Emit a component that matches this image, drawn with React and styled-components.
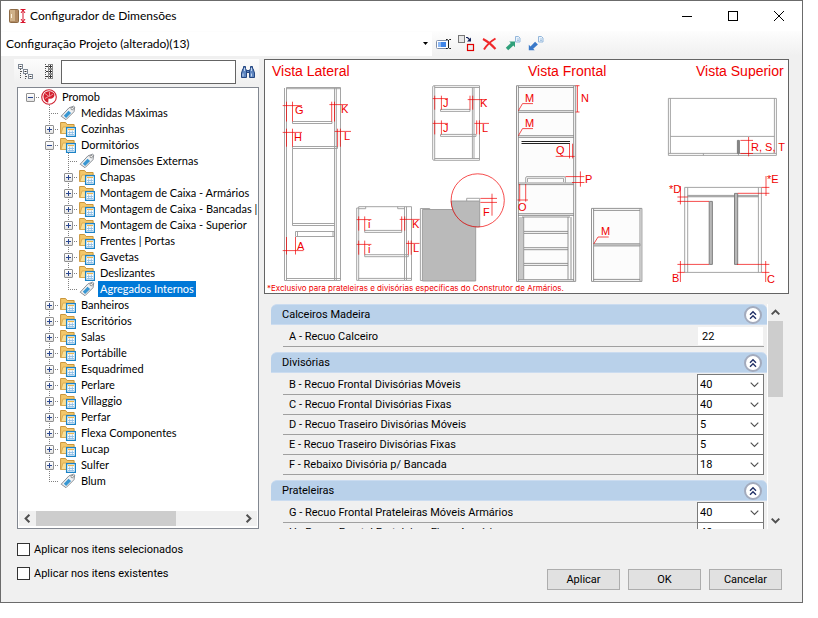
import React, { useState } from "react";
import styled, { createGlobalStyle } from "styled-components";

const GlobalStyle = createGlobalStyle`
  *, *::before, *::after { box-sizing: border-box; }
  html, body { margin: 0; background: #ffffff; }
  body, button, input, select {
    font-family: Roboto, "Liberation Sans", sans-serif;
    font-size: 11px;
    color: #000000;
  }
`;

const Screen = styled.div`
  height: 100vh;
  min-height: 480px;
  padding: 0 15px 15px 0;
`;

const Dialog = styled.main`
  display: flex;
  flex-direction: column;
  height: 100%;
  background: #f0f0f0;
  border: 1px solid #6b6b6b;
`;

const TitleBar = styled.header`
  display: flex;
  align-items: center;
  flex: 0 0 30px;
  padding: 0 0 0 7px;
  background: #ffffff;
`;

const Title = styled.h1`
  flex: 1;
  margin: 0 0 0 4px;
  font: 400 12px/16px Lato, "Open Sans", sans-serif;
`;

const WindowButton = styled.button`
  display: grid;
  place-items: center;
  width: 46px;
  height: 30px;
  padding: 0;
  border: 0;
  background: transparent;
`;

const ConfigBar = styled.div`
  display: flex;
  align-items: center;
  flex: 0 0 25px;
  background: linear-gradient(#fdfdfd, #f0f0f0);
`;

const ConfigPicker = styled.label`
  display: grid;
  grid-template-columns: 1fr 13px;
  align-items: center;
  flex: 0 1 431px;
  height: 24px;
  background: #ffffff;

  > * { grid-row: 1; }
  > select { grid-column: 1 / 3; }
  > svg { grid-column: 2; justify-self: center; pointer-events: none; }
`;

const ConfigSelect = styled.select`
  appearance: none;
  width: 100%;
  height: 24px;
  padding: 0 12px 0 5px;
  border: 0;
  background: transparent;
  font: 400 12px/16px Lato, "Open Sans", sans-serif;
`;

const IconButton = styled.button`
  display: grid;
  place-items: center;
  flex: 0 0 ${(p) => p.$width || 23}px;
  height: 24px;
  padding: 0;
  border: 0;
  background: transparent;
`;

const Body = styled.div`
  display: flex;
  flex: 1;
  gap: 5px;
  min-height: 0;
  padding: 3px 13px 0 13px;
`;

const Sidebar = styled.aside`
  display: flex;
  flex-direction: column;
  flex: 0 0 245px;
  min-width: 0;
  min-height: 0;
`;

const SearchBar = styled.div`
  display: flex;
  align-items: center;
  flex: 0 0 25px;
  background: linear-gradient(#fcfcfc, #f0f0f0);
`;

const SearchInput = styled.input`
  flex: 1;
  min-width: 0;
  height: 24px;
  padding: 0 4px;
  border: 1px solid #646464;
  border-radius: 0;
  background: #ffffff;
`;

const TreeBox = styled.div`
  display: flex;
  flex-direction: column;
  flex: 1;
  min-height: 0;
  margin: 3px 0 0 3px;
  padding: 1px;
  border: 1px solid #828790;
  background: #ffffff;
`;

const TreeList = styled.ul`
  flex: 1;
  min-height: 0;
  margin: 0;
  padding: 0 0 0 2px;
  overflow: auto;
  scrollbar-width: none;
  list-style: none;
`;

const TreeRow = styled.li`
  display: flex;
  align-items: center;
  height: 16px;
  white-space: nowrap;

  > svg { flex: 0 0 16px; margin: 0 3px 0 1px; }
`;

const dots = "repeating-linear-gradient(";
const Guide = styled.span`
  display: flex;
  align-items: center;
  justify-content: center;
  flex: 0 0 19px;
  height: 16px;
  background-repeat: no-repeat;
  background-image:
    ${dots}#808080 0 1px, transparent 1px 2px),
    ${dots}90deg, #808080 0 1px, transparent 1px 2px);
  background-position: 9px 0, 9px 8px;
  background-size:
    1px ${(p) => ({ full: 16, half: 8 }[p.$line] || 0)}px,
    ${(p) => (p.$branch ? 10 : 0)}px 1px;
`;

const Expander = styled.button`
  display: grid;
  place-items: center;
  width: 9px;
  height: 9px;
  padding: 0;
  border: 1px solid #919191;
  border-radius: 1px;
  background: linear-gradient(#ffffff, #e4e4e4);
`;

const TreeLabel = styled.span`
  padding: 0 2px;
  font-family: Lato, "Liberation Sans", sans-serif;
  line-height: 16px;
  color: ${(p) => (p.$selected ? "#ffffff" : "#000000")};
  background: ${(p) => (p.$selected ? "#0078d7" : "transparent")};
`;

const HScroll = styled.div`
  display: flex;
  align-items: center;
  flex: 0 0 15px;
  margin-bottom: 1px;
  background: #f0f0f0;
`;

const HThumb = styled.div`
  flex: 0 0 59%;
  height: 15px;
  background: #cdcdcd;
`;

const ScrollArrow = styled.button`
  display: grid;
  place-items: center;
  flex: 0 0 17px;
  padding: 0;
  border: 0;
  background: transparent;
`;

const Spacer = styled.div`
  flex: 1;
`;

const Content = styled.section`
  display: flex;
  flex-direction: column;
  flex: 1;
  min-width: 0;
  min-height: 0;
`;

const Preview = styled.figure`
  flex: 0 0 235px;
  margin: 0;
  border: 1px solid #646464;
  background: #ffffff;

  > svg { display: block; width: 100%; height: 233px; }
`;

const ListArea = styled.div`
  display: flex;
  flex: 1;
  min-height: 0;
  margin: 10px 6px 0 7px;
`;

const Groups = styled.div`
  flex: 1;
  min-width: 0;
  overflow: auto;
  scrollbar-width: none;
`;

const Group = styled.section`
  margin-bottom: 5px;
`;

const GroupHeader = styled.div`
  display: flex;
  align-items: center;
  justify-content: space-between;
  height: 21px;
  padding: 0 5px 0 11px;
  border: 1px solid #cbdcf0;
  border-width: 1px 0;
  border-radius: 6px 6px 0 0;
  background: #b9d1ea;
`;

const GroupTitle = styled.h2`
  margin: 0;
  font-size: 11px;
  font-weight: 400;
  line-height: 16px;
`;

const CollapseButton = styled.button`
  display: grid;
  place-items: center;
  width: 18px;
  height: 18px;
  padding: 0;
  border: 2px solid #a3abbd;
  border-radius: 50%;
  background: #ffffff;
`;

const GroupRows = styled.div`
  padding: 2px 3px 0 12px;
`;

const Field = styled.div`
  display: flex;
  height: 20px;
  border-bottom: 1px solid #a0a0a0;
`;

const FieldLabel = styled.label`
  flex: 1;
  min-width: 0;
  padding-left: 6px;
  line-height: 20px;
  white-space: nowrap;
`;

const TextField = styled.input`
  width: 65px;
  height: 18px;
  margin-right: 1px;
  padding: 0 4px;
  border: 0;
  border-radius: 0;
  background: #ffffff;
`;

const Combo = styled.div`
  display: grid;
  grid-template-columns: 1fr 18px;
  align-items: center;
  width: 67px;
  height: 21px;
  margin-top: -1px;
  border: 1px solid #7a7a7a;
  background: #ffffff;

  > * { grid-row: 1; }
  > select { grid-column: 1 / 3; }
  > svg { grid-column: 2; justify-self: center; pointer-events: none; }
`;

const ComboSelect = styled.select`
  appearance: none;
  width: 100%;
  height: 19px;
  padding: 0 0 1px 2px;
  border: 0;
  background: transparent;
`;

const VScroll = styled.div`
  display: flex;
  flex-direction: column;
  flex: 0 0 16px;
  border-left: 1px solid #ffffff;
`;

const VThumb = styled.div`
  flex: 0 0 76px;
  background: #cdcdcd;
`;

const Footer = styled.footer`
  display: flex;
  justify-content: space-between;
  flex: 0 0 73px;
  padding: 12px 20px 12px 16px;
`;

const Options = styled.div`
  display: flex;
  flex-direction: column;
  gap: 8px;
`;

const Option = styled.label`
  display: flex;
  align-items: center;
  gap: 4px;
  height: 16px;
`;

const CheckBox = styled.input`
  appearance: none;
  width: 13px;
  height: 13px;
  margin: 0;
  border: 1px solid #333333;
  background: #ffffff;

  &:checked { background: #0078d7; }
`;

const Actions = styled.div`
  display: flex;
  align-items: flex-end;
  gap: 8px;
`;

const ActionButton = styled.button`
  width: 73px;
  height: 21px;
  padding: 0;
  border: 1px solid #adadad;
  background: #e1e1e1;
`;

/* ---------- icons ---------- */

const AppIcon = () => (
  <svg width="18" height="16" viewBox="0 0 18 16" aria-hidden="true">
    <rect x="1.500" y="1.500" width="9" height="13" rx="1" fill="#b08a62" stroke="#8d6a45" />
    <rect x="2" y="2" width="5" height="11" fill="#d9bd97" opacity=".75" />
    <rect x="3" y="6" width="1" height="4" fill="#fff3df" />
    <path d="M12.500 1.500h5M12.500 14.500h5M15 2v12M13 5l2-3 2 3M13 11l2 3 2-3" fill="none" stroke="#d8132b" />
  </svg>
);

const RenameIcon = () => (
  <svg width="16" height="14" viewBox="0 0 16 14" aria-hidden="true">
    <rect x=".5" y="3.500" width="12" height="8" rx="1" fill="#fff" stroke="#7e8ea8" />
    <rect x="2" y="5" width="8" height="5" fill="#3f85e8" />
    <rect x="2" y="5" width="3" height="5" fill="#8bb7f4" />
    <path d="M10 2.500h1.500l1 1 1-1H15M12.500 3v8M10 11.500h1.500l1-1 1 1H15" fill="none" stroke="#222" />
  </svg>
);

const ReplaceIcon = () => (
  <svg width="17" height="17" viewBox="0 0 17 17" aria-hidden="true">
    <rect x=".5" y=".5" width="6" height="7" fill="#e8e8e8" stroke="#777" />
    <rect x="9.500" y="9.500" width="6" height="6" fill="#eee" stroke="#e00000" strokeWidth="1.200" />
    <path d="M8 2.500h1.500l2.500 2.500" fill="none" stroke="#16245c" strokeWidth="1.200" />
    <path d="M13 2.500v4H9z" fill="#16245c" />
  </svg>
);

const DeleteIcon = () => (
  <svg width="15" height="14" viewBox="0 0 15 14" aria-hidden="true">
    <path d="M1 2Q8 5.500 13.500 12M13.500 1.500Q6 6 2 12.500" fill="none" stroke="#f0282a" strokeWidth="2" />
  </svg>
);

const TransferIcon = ({ color, incoming }) => (
  <svg width="16" height="15" viewBox="0 0 16 15" aria-hidden="true">
    <path d="M10.500 .5h3l1.500 1.500v4h-4.500z" fill="#eaf3fc" stroke="#94b7db" />
    <path d="M12 3h2M12 4.500h2" stroke="#94b7db" strokeWidth=".8" />
    {incoming ? (
      <path d="M.8 14.200V8.800l1.700 1.600 4.600-4.600 2.800 2.800-4.700 4.100 1.500 1.500z" fill={color} />
    ) : (
      <path d="M.8 11.800L5.800 7 4.200 5.500h5.800v5.700L8.400 9.600 3.200 14.200z" fill={color} />
    )}
  </svg>
);

const CollapseTreeIcon = () => (
  <svg width="16" height="16" viewBox="0 0 16 16" aria-hidden="true">
    <g fill="#fff" stroke="#7d8794">
      <rect x=".5" y=".5" width="4" height="4" />
      <rect x="5.500" y="5.500" width="4" height="4" />
      <rect x="10.500" y="10.500" width="4" height="4" />
    </g>
    <path d="M1.500 2.500h2M6.500 7.500h2M11.500 12.500h2" stroke="#333" />
    <path d="M2.500 5v10M7.500 10v6M3 7.500h2M8 12.500h2" stroke="#555" strokeDasharray="1 1" />
  </svg>
);

const ExpandTreeIcon = () => (
  <svg width="10" height="16" viewBox="0 0 10 16" aria-hidden="true">
    <path d="M1.500 0v16" stroke="#555" strokeDasharray="1 1" />
    {[0, 5, 10].map((y) => (
      <g key={y} stroke="#8a8a8a">
        <rect x="4.500" y={y + 0.5} width="4" height="4" fill="#fff" />
        <path d={`M5 ${y + 2.5}h3M6.500 ${y + 1}v3M2 ${y + 2.5}h2`} stroke="#333" />
      </g>
    ))}
  </svg>
);

const BinocularsIcon = () => (
  <svg width="16" height="14" viewBox="0 0 16 14" aria-hidden="true">
    <g fill="#5f86c0" stroke="#254680">
      <path d="M3.500 1.500h2v2l1 2v7h-5V8l1.500-4.500h.5z" />
      <path d="M12.500 1.500h-2v2l-1 2v7h5V8L13 3.500h-.5z" />
      <path d="M6.500 5.500h3v2h-3z" />
    </g>
    <path d="M3 8.500v3M11.500 8.500v3M4.500 3v3M11.500 3v3" stroke="#c3d7f2" />
  </svg>
);

const PromobIcon = () => (
  <svg width="16" height="16" viewBox="0 0 16 16" aria-hidden="true">
    <circle cx="8" cy="8" r="7.300" fill="#fff" stroke="#cf1f2e" strokeWidth="1.100" />
    <path d="M8.300 2.300C4.500 2 2.300 5 2.500 8c.2 3 2 5 4.700 5.700l.3-4.200 1.500.3c3 0 4.600-1.700 4.500-4C13.300 3.500 10.500 2.300 8.300 2.300z" fill="#d3202f" />
    <path d="M4 4.500l4 3M8.500 3v4.500L12 5M4 9.500l3.500-2" stroke="#f5b5ba" strokeWidth=".8" fill="none" />
  </svg>
);

const TagIcon = () => (
  <svg width="16" height="16" viewBox="0 0 16 16" aria-hidden="true">
    <path d="M1.200 11.200L9 2.800l4.700-1.600 1 .8-.7 4.700-8 8z" fill="#eef0f2" stroke="#8b8f95" />
    <path d="M3.800 10.700L8.500 5.700l2.600 2.400-5 5z" fill="#3796d2" />
    <circle cx="12.200" cy="3.600" r="1.200" fill="#fff" stroke="#777" strokeWidth=".8" />
  </svg>
);

const FolderIcon = () => (
  <svg width="16" height="16" viewBox="0 0 16 16" aria-hidden="true">
    <path d="M.6 12.500V1.500h5l1.500 2h7v9z" fill="#f3c76a" stroke="#c9963c" />
    <path d="M1 12.500L3 6h11.500v6.500z" fill="#fbdf96" stroke="#d5a64d" strokeWidth=".8" />
    <rect x="6.600" y="6.600" width="8.800" height="8.800" fill="#fff" stroke="#1c83c6" strokeWidth="1.300" />
    <path d="M8 8.500h6" stroke="#f0b84b" strokeWidth="1.200" />
    <path d="M8 11.500h6M8 13.500h6M9.700 9.500v5M12.300 9.500v5" stroke="#8fc0e6" strokeWidth=".9" />
  </svg>
);

const Sign = ({ open }) => (
  <svg width="7" height="7" viewBox="0 0 7 7" aria-hidden="true">
    <path d={open ? "M1 3.500h5" : "M1 3.500h5M3.500 1v5"} stroke="#2a4790" />
  </svg>
);

const rotations = { down: 0, left: 90, up: 180, right: 270 };
const Chevron = ({ direction = "down", weight = 1.1, size = 9 }) => (
  <svg width={size} height={size} viewBox="0 0 9 9" aria-hidden="true">
    <path d="M.7 2.600L4.500 6.400 8.300 2.600" fill="none" stroke="#505050" strokeWidth={weight} transform={`rotate(${rotations[direction]} 4.5 4.5)`} />
  </svg>
);

const DoubleUp = () => (
  <svg width="10" height="10" viewBox="0 0 10 10" aria-hidden="true">
    <path d="M2 4.700L5 1.700l3 3M2 8.700L5 5.700l3 3" fill="none" stroke="#1f2f66" strokeWidth="1.400" />
  </svg>
);

/* ---------- technical drawing ---------- */

const Lines = ({ d }) => <path d={d} />;

const Drawing = () => (
  <svg viewBox="265 60 523 233" role="img" aria-label="Vista Lateral, Vista Frontal, Vista Superior">
    <g fill="none" stroke="#9b9b9b" strokeWidth=".9">
      {/* tall cabinet, side */}
      <Lines d="M284.500 88v192.500H340.500V87.500H286.500V280M286.500 88.700H340.500M334.500 88V280M336.300 88V280M286 278.500H340.500" />
      <Lines d="M292.500 121.500H332V123.500H292.500zM292.500 146.500H337.500V148.500H292.500zM292.500 148.500V225.500H334.500M292.500 223.500H334.500M295.500 231.500H334.500V236.500H295.500zM297.500 231.500V236.500M333 231.500V236.500" />
      {/* wall cabinet, side */}
      <Lines d="M432.700 87Q432.700 85.700 434 85.700H479.500V160.300H434Q432.700 160.300 432.700 159zM434.700 86V160M434.700 87.500H479.500M434.700 158.500H479.500M472.400 87.500V158.500M474 87.500V158.500" />
      <Lines d="M440.500 109.400H470V111.400H440.500zM440.500 134.400H476V136.400H440.500z" />
      {/* base cabinet, side */}
      <Lines d="M356.700 208H358.700M358.700 206.700H411.500V280.400H356.700V208M358.700 206.700V280M404.500 206.700V280M406.500 206.700V280M358.700 278.400H411.500M358.700 208.700H365.700V206.700M397.700 206.700V208.700H405" />
      <Lines d="M364.700 230.400H401.700V232.400H364.700zM364.700 254.700H408.400V256.700H364.700z" />
      <Lines d="M420.400 208.500H429.700V210M422.400 280.500H420.400V208.500" />
      <path d="M422.400 209.500H475.700V281H422.400z" fill="#bababa" stroke="#999" />
      <path d="M451.100 201H479.700V226.900A26.600 26.600 0 0 1 451.100 201z" fill="#bababa" stroke="#999" />
      <Lines d="M466.700 201V198.300H479.700V201" />
      {/* tall cabinet, front */}
      <rect x="518" y="87" width="56" height="194" fill="#fcfcfc" stroke="none" />
      <g stroke="#888">
        <Lines d="M516.500 85.700H575.700V281.400H516.500zM518.400 86V281M573.700 86V281M518 87.500H574M518 110.700H574M518 112.400H574M518 135.700H574M518 137.400H574M518 183H574M518 184.600H574M518 213.700H574M518 215.400H574M518 279.700H574" />
        <Lines d="M522 217V279.500M523.700 217V279.500M568 217V279.500M571 217V279.500M520 217V279.500M522 217H570M524 231.400H568M524 233.400H568M524 247.700H568M524 249.700H568M524 263.400H568M524 265.400H568" />
      </g>
      <path d="M521.500 141.500H570M521.500 143.500H570" stroke="#222" strokeWidth="1" />
      <Lines d="M525.700 182.700V178Q525.700 176.600 527 176.600H564Q565.400 176.600 565.400 178V182.700M527.500 182V178.300H563.500V182" />
      {/* low cabinet, front */}
      <rect x="593" y="210" width="47" height="70" fill="#fcfcfc" stroke="none" />
      <g stroke="#888">
        <Lines d="M591.500 208.400H641.900V281.400H591.500zM593.600 208.500V281M640 208.500V281M593.500 210.400H640M593.500 279.400H640" />
      </g>
      <path d="M593.500 243.700H640V246H593.500z" fill="#c4c4c4" />
      {/* cabinet, top */}
      <Lines d="M668.400 98.400H776.400V155.400H668.400zM670.400 98.400V153.400M774.400 98.400V153.400M670.400 136.400H774.400M668.400 153.400H776.400M703.400 153.400V155.400M738.400 153.400V155.400" />
      <path d="M737.400 140.400H739.400V153.400H737.400z" fill="#888" stroke="#777" />
      {/* divisions, top */}
      <Lines d="M684.700 187.400H761.400V272.400H684.700zM687.700 187.400V272.400M758.400 187.400V272.400" />
      <path d="M687.700 195.400H758.400V196.800H687.700z" fill="#b0b0b0" />
      <path d="M709.200 201.400H712.400V264.400H709.200zM734.500 193.400H737.700V264.400H734.500z" fill="#b8b8b8" stroke="#777" />
    </g>

    <g fill="none" stroke="#f00000" strokeWidth=".7">
      <Lines d="M286.500 101.700V121.500M292.500 101.700V121.500M282.700 105.600H302M331.700 101.700V121.500M334.500 101.700V121.500M329.400 104.600H348" />
      <Lines d="M286.500 128.700V146.700M292.500 128.700V146.700M282.700 132.400H302M337.600 128.700V146.700M340.400 128.700V146.700M334.700 131.400H351" />
      <Lines d="M286.500 237V254.500M295.500 237V254.500M282.700 250.600H303.500" />
      <Lines d="M434.700 95.700V109.700M441.400 95.700V109.700M432.700 98.600H448M470 95.700V109.700M472.700 95.700V109.700M467.700 99.600H487" />
      <Lines d="M434.700 120.400V134.400M441.400 120.400V134.400M432.700 123.400H448M476.700 120.400V134.400M479.400 120.400V134.400M474.400 123.400H489" />
      <Lines d="M358.700 216.400V230.600M364.700 216.400V230.600M356.700 219.600H371.400M401.700 216.400V230.600M404.700 216.400V230.600M399.700 219.400H419.700" />
      <Lines d="M358.700 240.600V254.700M364.700 240.600V254.700M356.700 244.400H371.400M408.400 240.600V254.700M411.200 240.600V254.700M406 243.400H419.500" />
      <circle cx="477.700" cy="200.400" r="26.600" />
      <Lines d="M480.400 198.400H497M480.400 202.400H497M492 193.700V215.700" />
      <Lines d="M518.400 110.700L522.500 103.600H533M518.400 135.700L522.500 128.600H533M577.400 85.700V112M575.500 85.700H579.500M575.500 112H579.500" />
      <Lines d="M569.500 143.700V158.400M572.600 143.700V158.400M555.700 156.400H574.700" />
      <Lines d="M519.700 184V201.700M525.700 184V201.700M517.400 200H528M565.400 176.600H584.400M572 182.500H584.400M580.400 171.400V186.700" />
      <Lines d="M593.700 244L598 237H608.700" />
      <Lines d="M740.400 140.400H753M740.400 153.500H753M748.600 137V156.400" />
      <Lines d="M680.400 186V204.400M677.400 197H687.700M677.400 201.400H709M766 176V196M761.500 187.400H769.400M737.700 193.300H769.400" />
      <Lines d="M680.400 261V282M677.400 264.400H709M677.400 272.400H684.700M765.700 261V282M737 264.400H769.400M761.400 272.400H769.400" />
    </g>

    <g fill="#f00000" fontFamily='"Liberation Sans", sans-serif' fontSize="11">
      <g fontSize="14">
        <text x="272" y="76">Vista Lateral</text>
        <text x="528" y="76">Vista Frontal</text>
        <text x="696" y="76">Vista Superior</text>
      </g>
      <text x="295" y="114">G</text>
      <text x="341" y="113">K</text>
      <text x="294" y="141">H</text>
      <text x="344" y="140">L</text>
      <text x="297" y="250">A</text>
      <text x="443" y="107">J</text>
      <text x="480" y="107">K</text>
      <text x="443" y="132">J</text>
      <text x="482" y="132">L</text>
      <text x="368" y="228">i</text>
      <text x="412" y="228">K</text>
      <text x="368" y="253">i</text>
      <text x="413" y="252">L</text>
      <text x="483" y="216">F</text>
      <text x="525" y="102">M</text>
      <text x="525" y="127">M</text>
      <text x="581" y="102">N</text>
      <text x="556" y="154">Q</text>
      <text x="585" y="183">P</text>
      <text x="518" y="211">O</text>
      <text x="601" y="235">M</text>
      <text x="751" y="151">R, S, T</text>
      <text x="669" y="193">*D</text>
      <text x="767" y="183">*E</text>
      <text x="672" y="282">B</text>
      <text x="767" y="283">C</text>
      <text x="267" y="291" fontSize="8" fontFamily='Inter, "Liberation Sans", sans-serif'>*Exclusivo para prateleiras e divisórias específicas do Construtor de Armários.</text>
    </g>
  </svg>
);

/* ---------- data ---------- */

const tree = [
  { label: "Promob", level: 0, kind: "root", open: true, last: true },
  { label: "Medidas Máximas", level: 1, kind: "tag" },
  { label: "Cozinhas", level: 1 },
  { label: "Dormitórios", level: 1, open: true },
  { label: "Dimensões Externas", level: 2, kind: "tag" },
  { label: "Chapas", level: 2 },
  { label: "Montagem de Caixa - Armários", level: 2 },
  { label: "Montagem de Caixa - Bancadas |", level: 2 },
  { label: "Montagem de Caixa - Superior", level: 2 },
  { label: "Frentes | Portas", level: 2 },
  { label: "Gavetas", level: 2 },
  { label: "Deslizantes", level: 2 },
  { label: "Agregados Internos", level: 2, kind: "tag", last: true },
  { label: "Banheiros", level: 1 },
  { label: "Escritórios", level: 1 },
  { label: "Salas", level: 1 },
  { label: "Portábille", level: 1 },
  { label: "Esquadrimed", level: 1 },
  { label: "Perlare", level: 1 },
  { label: "Villaggio", level: 1 },
  { label: "Perfar", level: 1 },
  { label: "Flexa Componentes", level: 1 },
  { label: "Lucap", level: 1 },
  { label: "Sulfer", level: 1 },
  { label: "Blum", level: 1, kind: "tag", last: true },
];

const groups = [
  { title: "Calceiros Madeira", fields: [{ label: "A - Recuo Calceiro", value: "22", text: true }] },
  {
    title: "Divisórias",
    fields: [
      { label: "B - Recuo Frontal Divisórias Móveis", value: "40" },
      { label: "C - Recuo Frontal Divisórias Fixas", value: "40" },
      { label: "D - Recuo Traseiro Divisórias Móveis", value: "5" },
      { label: "E - Recuo Traseiro Divisórias Fixas", value: "5" },
      { label: "F - Rebaixo Divisória p/ Bancada", value: "18" },
    ],
  },
  {
    title: "Prateleiras",
    fields: [
      { label: "G - Recuo Frontal Prateleiras Móveis Armários", value: "40" },
      { label: "H - Recuo Frontal Prateleiras Fixas Armários", value: "40" },
    ],
  },
];

const TreeItem = ({ node, selected, onSelect }) => {
  const { label, level, kind, open, last } = node;
  return (
    <TreeRow role="treeitem" aria-level={level + 1} aria-selected={selected} onClick={onSelect}>
      {Array.from({ length: level }, (_, i) => (
        <Guide key={i} $line={i > 0 ? "full" : "none"} />
      ))}
      <Guide $branch $line={level === 0 ? "none" : last ? "half" : "full"}>
        {kind !== "tag" && (
          <Expander type="button" aria-label={open ? `Recolher ${label}` : `Expandir ${label}`}>
            <Sign open={open} />
          </Expander>
        )}
      </Guide>
      {kind === "root" ? <PromobIcon /> : kind === "tag" ? <TagIcon /> : <FolderIcon />}
      <TreeLabel $selected={selected}>{label}</TreeLabel>
    </TreeRow>
  );
};

const FieldRow = ({ field }) => {
  const id = `campo-${field.label[0]}`;
  return (
    <Field>
      <FieldLabel htmlFor={id}>{field.label}</FieldLabel>
      {field.text ? (
        <TextField id={id} defaultValue={field.value} />
      ) : (
        <Combo>
          <ComboSelect id={id} defaultValue={field.value}>
            <option>{field.value}</option>
          </ComboSelect>
          <Chevron />
        </Combo>
      )}
    </Field>
  );
};

export default function App() {
  const [selected, setSelected] = useState("Agregados Internos");

  return (
    <Screen>
      <GlobalStyle />
      <Dialog>
        <TitleBar>
          <AppIcon />
          <Title>Configurador de Dimensões</Title>
          <WindowButton aria-label="Minimizar">
            <svg width="10" height="10"><path d="M0 5.500h10" stroke="#000" /></svg>
          </WindowButton>
          <WindowButton aria-label="Maximizar">
            <svg width="10" height="10"><rect x=".5" y=".5" width="9" height="9" fill="none" stroke="#000" /></svg>
          </WindowButton>
          <WindowButton aria-label="Fechar">
            <svg width="10" height="10"><path d="M0 0l10 10M10 0L0 10" stroke="#000" /></svg>
          </WindowButton>
        </TitleBar>

        <ConfigBar>
          <ConfigPicker>
            <ConfigSelect aria-label="Configuração">
              <option>Configuração Projeto (alterado)(13)</option>
            </ConfigSelect>
            <svg width="5" height="3" viewBox="0 0 5 3"><path d="M0 0h5L2.500 3z" /></svg>
          </ConfigPicker>
          <IconButton aria-label="Renomear"><RenameIcon /></IconButton>
          <IconButton aria-label="Substituir"><ReplaceIcon /></IconButton>
          <IconButton aria-label="Excluir"><DeleteIcon /></IconButton>
          <IconButton aria-label="Exportar"><TransferIcon color="#2fa07a" /></IconButton>
          <IconButton aria-label="Importar"><TransferIcon color="#3a79c9" incoming /></IconButton>
        </ConfigBar>

        <Body>
          <Sidebar>
            <SearchBar>
              <IconButton aria-label="Recolher tudo"><CollapseTreeIcon /></IconButton>
              <IconButton aria-label="Expandir tudo" $width={24}><ExpandTreeIcon /></IconButton>
              <SearchInput type="text" aria-label="Pesquisar" />
              <IconButton aria-label="Localizar"><BinocularsIcon /></IconButton>
            </SearchBar>
            <TreeBox>
              <TreeList role="tree">
                {tree.map((node) => (
                  <TreeItem
                    key={node.label}
                    node={node}
                    selected={selected === node.label}
                    onSelect={() => setSelected(node.label)}
                  />
                ))}
              </TreeList>
              <HScroll>
                <ScrollArrow aria-label="Rolar para a esquerda"><Chevron direction="left" weight={2} /></ScrollArrow>
                <HThumb />
                <Spacer />
                <ScrollArrow aria-label="Rolar para a direita"><Chevron direction="right" weight={2} /></ScrollArrow>
              </HScroll>
            </TreeBox>
          </Sidebar>

          <Content>
            <Preview><Drawing /></Preview>
            <ListArea>
              <Groups>
                {groups.map((group) => (
                  <Group key={group.title}>
                    <GroupHeader>
                      <GroupTitle>{group.title}</GroupTitle>
                      <CollapseButton aria-label={`Recolher ${group.title}`}><DoubleUp /></CollapseButton>
                    </GroupHeader>
                    <GroupRows>
                      {group.fields.map((field) => <FieldRow key={field.label} field={field} />)}
                    </GroupRows>
                  </Group>
                ))}
              </Groups>
              <VScroll>
                <ScrollArrow aria-label="Rolar para cima"><Chevron direction="up" weight={2} /></ScrollArrow>
                <VThumb />
                <Spacer />
                <ScrollArrow aria-label="Rolar para baixo"><Chevron weight={2} /></ScrollArrow>
              </VScroll>
            </ListArea>
          </Content>
        </Body>

        <Footer>
          <Options>
            <Option><CheckBox type="checkbox" />Aplicar nos itens selecionados</Option>
            <Option><CheckBox type="checkbox" />Aplicar nos itens existentes</Option>
          </Options>
          <Actions>
            <ActionButton type="button">Aplicar</ActionButton>
            <ActionButton type="button">OK</ActionButton>
            <ActionButton type="button">Cancelar</ActionButton>
          </Actions>
        </Footer>
      </Dialog>
    </Screen>
  );
}
